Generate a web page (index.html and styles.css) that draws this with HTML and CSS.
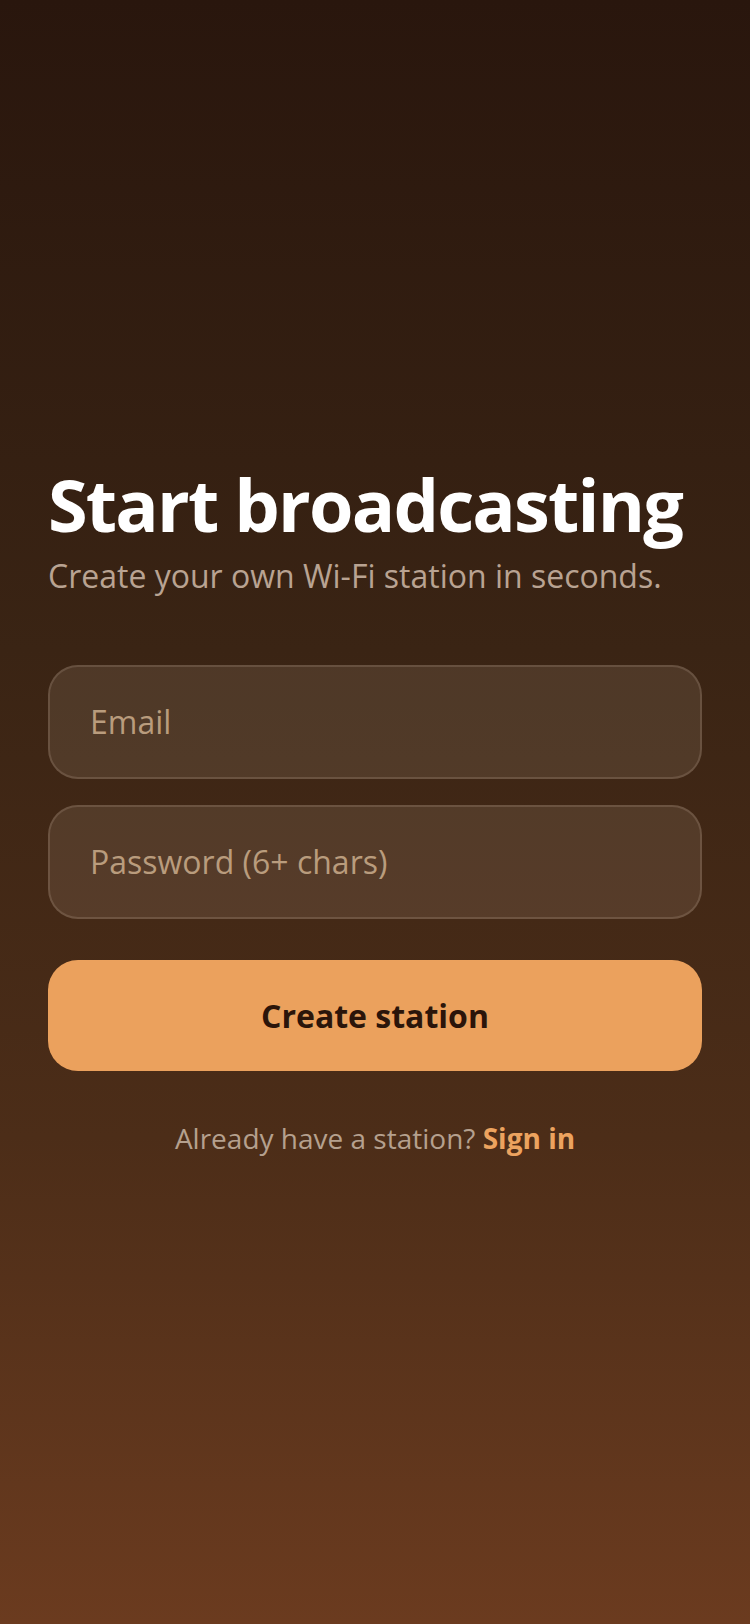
FILE: index.html
```html
<!DOCTYPE html>
<html lang="en">
<head>
<meta charset="utf-8">
<title>Start broadcasting</title>
<link rel="stylesheet" href="styles.css">
</head>
<body>
<main class="screen">
  <section class="panel">
    <h1 class="title">Start broadcasting</h1>
    <p class="subtitle">Create your own Wi-Fi station in seconds.</p>
    <form class="form">
      <input class="field" type="email" placeholder="Email">
      <input class="field" type="password" placeholder="Password (6+ chars)">
      <button class="primary" type="button">Create station</button>
    </form>
    <p class="alt">Already have a station? <a class="alt-link" href="#">Sign in</a></p>
  </section>
</main>
</body>
</html>
```

FILE: styles.css
```css
* { box-sizing: border-box; }
html, body { margin: 0; padding: 0; }
body {
  font-family: "Open Sans", "Noto Sans", sans-serif;
  background: #2a170e;
}
.screen {
  width: 750px;
  height: 1624px;
  display: flex;
  flex-direction: column;
  justify-content: center;
  padding: 0 48px 6px;
  background: linear-gradient(180deg, #29160d 0%, #3a2414 40%, #4c2d18 70%, #6b3b1f 100%);
}
.panel { display: flex; flex-direction: column; }
.title {
  margin: 0;
  font-size: 72px;
  font-weight: 700;
  line-height: 1.2;
  color: #ffffff;
  letter-spacing: -1.8px;
  white-space: nowrap;
}
.subtitle {
  margin: 8px 0 0;
  font-size: 32px;
  line-height: 1.3;
  color: #b9a392;
}
.form {
  display: flex;
  flex-direction: column;
  gap: 26px;
  margin-top: 68px;
}
.field {
  height: 114px;
  border-radius: 30px;
  border: 2px solid rgba(255, 235, 215, 0.14);
  background: rgba(255, 235, 215, 0.1);
  padding: 0 40px;
  font-family: inherit;
  font-size: 32px;
  color: #f3e3d2;
  outline: none;
}
.field::placeholder { color: #b99c7d; }
.primary {
  margin-top: 15px;
  height: 111px;
  border: none;
  border-radius: 30px;
  background: #eba15d;
  color: #2b150a;
  font-family: inherit;
  font-size: 32px;
  font-weight: 700;
}
.alt {
  margin: 48px 0 0;
  text-align: center;
  font-size: 28px;
  color: #b5a08e;
}
.alt-link {
  color: #eca35f;
  font-weight: 700;
  text-decoration: none;
}
```
